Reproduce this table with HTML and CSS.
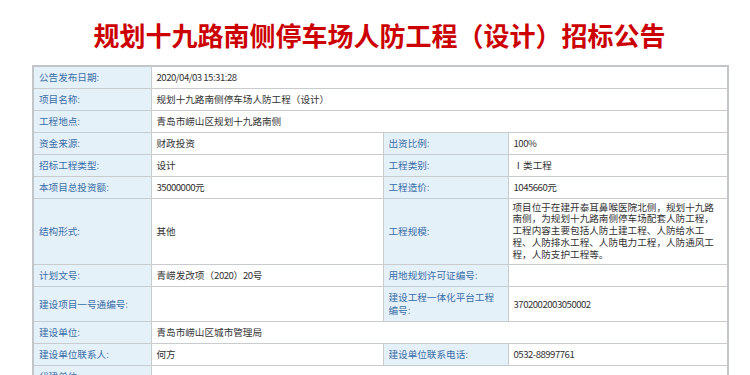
FILE: index.html
```html
<!DOCTYPE html>
<html lang="zh-CN">
<head>
<meta charset="utf-8">
<title>招标公告</title>
<link rel="stylesheet" href="styles.css">
</head>
<body>
<div class="page">
  <h1 class="title">规划十九路南侧停车场人防工程（设计）招标公告</h1>
  <table class="info">
    <colgroup>
      <col class="c1"><col class="c2"><col class="c3"><col class="c4">
    </colgroup>
    <tr><td class="lbl">公告发布日期:</td><td class="val" colspan="3"><span class="num">2020/04/03 15:31:28</span></td></tr>
    <tr><td class="lbl">项目名称:</td><td class="val" colspan="3">规划十九路南侧停车场人防工程（设计）</td></tr>
    <tr><td class="lbl">工程地点:</td><td class="val" colspan="3">青岛市崂山区规划十九路南侧</td></tr>
    <tr><td class="lbl">资金来源:</td><td class="val">财政投资</td><td class="lbl">出资比例:</td><td class="val"><span class="num">100%</span></td></tr>
    <tr><td class="lbl">招标工程类型:</td><td class="val">设计</td><td class="lbl">工程类别:</td><td class="val">Ⅰ类工程</td></tr>
    <tr><td class="lbl">本项目总投资额:</td><td class="val"><span class="num">35000000</span>元</td><td class="lbl">工程造价:</td><td class="val"><span class="num">1045660</span>元</td></tr>
    <tr class="tall"><td class="lbl">结构形式:</td><td class="val">其他</td><td class="lbl">工程规模:</td><td class="val multi">项目位于在建开泰耳鼻喉医院北侧，规划十九路南侧，为规划十九路南侧停车场配套人防工程，工程内容主要包括人防土建工程、人防给水工程、人防排水工程、人防电力工程，人防通风工程，人防支护工程等。</td></tr>
    <tr><td class="lbl">计划文号:</td><td class="val">青崂发改项（<span class="num">2020</span>）<span class="num">20</span>号</td><td class="lbl">用地规划许可证编号:</td><td class="val"></td></tr>
    <tr class="mid"><td class="lbl">建设项目一号通编号:</td><td class="val"></td><td class="lbl multi">建设工程一体化平台工程编号:</td><td class="val"><span class="num">3702002003050002</span></td></tr>
    <tr><td class="lbl">建设单位:</td><td class="val" colspan="3">青岛市崂山区城市管理局</td></tr>
    <tr><td class="lbl">建设单位联系人:</td><td class="val">何方</td><td class="lbl">建设单位联系电话:</td><td class="val"><span class="num">0532-88997761</span></td></tr>
    <tr><td class="lbl">代建单位:</td><td class="val" colspan="3"></td></tr>
  </table>
</div>
</body>
</html>
```
FILE: styles.css
```css
html, body {
  margin: 0;
  padding: 0;
  background: #ffffff;
}
body {
  font-family: "Noto Sans CJK SC", "Noto Sans", sans-serif;
  overflow: hidden;
}
.page {
  width: 695px;
  margin-left: 32px;
}
.title {
  margin: 0;
  padding-top: 18px;
  height: 65px;
  box-sizing: border-box;
  font-size: 26px;
  line-height: 34px;
  font-weight: bold;
  color: #cc0000;
  text-align: center;
  white-space: nowrap;
}
.info {
  width: 695px;
  border-collapse: collapse;
  table-layout: fixed;
  border: 2px solid #c2c6ca;
  font-size: 9.6px;
  line-height: 12px;
}
.c1 { width: 118px; }
.c2 { width: 232px; }
.c3 { width: 125px; }
.c4 { width: 220px; }
.info tr { height: 22px; }
.info tr.tall { height: 66px; }
.info tr.mid { height: 35px; }
.info td {
  border: 1px solid #c9cccf;
  padding: 0 8px 0 5px;
  vertical-align: middle;
}
.lbl {
  background: #e5f1f9;
  color: #3a6ea8;
}
.val {
  background: #ffffff;
  color: #333333;
}
.val.multi {
  padding: 2px 8px 2px 4px;
  line-height: 11.7px;
}
.lbl.multi {
  line-height: 13px;
  padding-right: 9px;
}
.num {
  letter-spacing: -0.5px;
}
```
